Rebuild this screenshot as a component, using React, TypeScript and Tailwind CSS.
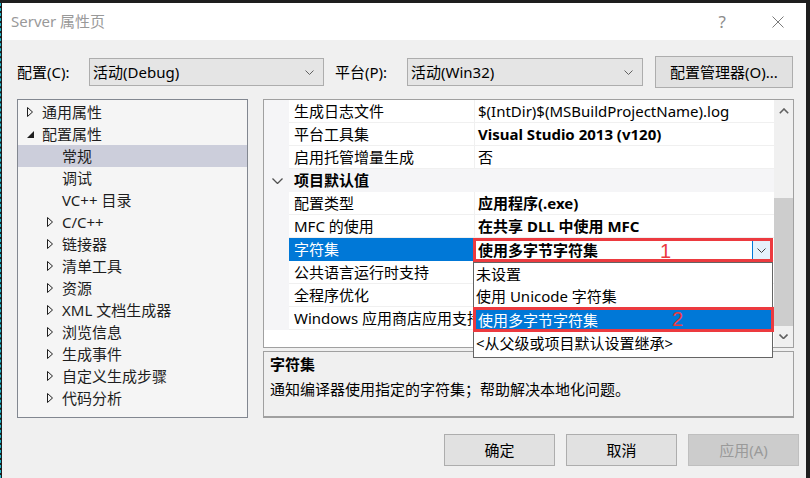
import React from 'react';

type TreeItem = { label: string; level: number; arrow?: 'open' | 'closed'; selected?: boolean };

const tree: TreeItem[] = [
  { label: '通用属性', level: 0, arrow: 'closed' },
  { label: '配置属性', level: 0, arrow: 'open' },
  { label: '常规', level: 1, selected: true },
  { label: '调试', level: 1 },
  { label: 'VC++ 目录', level: 1 },
  { label: 'C/C++', level: 1, arrow: 'closed' },
  { label: '链接器', level: 1, arrow: 'closed' },
  { label: '清单工具', level: 1, arrow: 'closed' },
  { label: '资源', level: 1, arrow: 'closed' },
  { label: 'XML 文档生成器', level: 1, arrow: 'closed' },
  { label: '浏览信息', level: 1, arrow: 'closed' },
  { label: '生成事件', level: 1, arrow: 'closed' },
  { label: '自定义生成步骤', level: 1, arrow: 'closed' },
  { label: '代码分析', level: 1, arrow: 'closed' },
];

type Row = { name: string; value?: string; bold?: boolean; category?: boolean; selected?: boolean };

const rows: Row[] = [
  { name: '生成日志文件', value: '$(IntDir)$(MSBuildProjectName).log' },
  { name: '平台工具集', value: 'Visual Studio 2013 (v120)', bold: true },
  { name: '启用托管增量生成', value: '否' },
  { name: '项目默认值', category: true },
  { name: '配置类型', value: '应用程序(.exe)', bold: true },
  { name: 'MFC 的使用', value: '在共享 DLL 中使用 MFC', bold: true },
  { name: '字符集', selected: true },
  { name: '公共语言运行时支持' },
  { name: '全程序优化' },
  { name: 'Windows 应用商店应用支持' },
];

const options = ['未设置', '使用 Unicode 字符集', '使用多字节字符集', '<从父级或项目默认设置继承>'];

function Chevron({ color = '#606060', bold = false }: { color?: string; bold?: boolean }) {
  return (
    <svg width="9" height="5" viewBox="0 0 9 5">
      <path d="M0.5 0.5 L4.5 4.5 L8.5 0.5" stroke={color} strokeWidth={bold ? 1.6 : 1} fill="none" />
    </svg>
  );
}

function Arrow({ kind }: { kind?: 'open' | 'closed' }) {
  if (kind === 'closed')
    return (
      <svg width="7" height="10" viewBox="0 0 7 10">
        <path d="M0.5 0.5 L5.5 5 L0.5 9.5 Z" stroke="#1e1e1e" fill="none" />
      </svg>
    );
  if (kind === 'open')
    return (
      <svg width="7" height="10" viewBox="0 0 7 10">
        <path d="M7 2 L7 9 L0 9 Z" fill="#1e1e1e" />
      </svg>
    );
  return null;
}

function Combo({ text, width }: { text: string; width: string }) {
  return (
    <div className={`flex h-[28px] ${width} items-center justify-between border border-[#adadad] bg-[#e5e5e5] pl-[3px] pr-[9px]`}>
      <span>{text}</span>
      <Chevron />
    </div>
  );
}

function CharsetEditor() {
  return (
    <>
      <div className="absolute left-[-2px] top-0 z-10 flex h-[24px] w-[300px] items-center border-[3px] border-[#ec3a3f] bg-white">
        <span className="flex-1 pl-[2px] font-bold leading-[18px] text-black">使用多字节字符集</span>
        <div className="flex h-full w-[18px] items-center justify-center border-l border-[#0078d7] bg-[#e5f1fb]">
          <Chevron color="#404040" />
        </div>
        <span className="absolute left-[184px] top-[-2px] font-['Liberation_Sans',sans-serif] text-[20px] leading-[24px] text-[#ec3a3f]">1</span>
      </div>
      <div className="absolute left-[-2px] top-[24px] z-10 w-[300px] border border-[#646464] bg-white pb-[3px] text-black">
        {options.map((o, i) =>
          i === 2 ? (
            <div key={o} className="relative flex h-[25px] items-center bg-[#0078d7] pl-[4px] text-white">
              {o}
              <div className="absolute inset-y-0 left-[-1px] right-[-2px] border-[3px] border-[#ec3a3f]" />
              <span className="absolute left-[198px] top-[0px] font-['Liberation_Sans',sans-serif] text-[20px] leading-[24px] text-[#ec3a3f]">2</span>
            </div>
          ) : (
            <div key={o} className="flex h-[22px] items-center pl-[2px]">
              {o}
            </div>
          )
        )}
      </div>
    </>
  );
}

export default function App() {
  return (
    <div className="flex h-[478px] w-[810px] overflow-hidden bg-[#1e1e1e] pt-[3px] pr-[4px] font-['Noto_Sans','Noto_Sans_CJK_SC',sans-serif] text-[15px] text-black">
      <div className="w-[2px] border-l border-dashed border-[#1fb5c9]" />
      <div className="flex flex-1 flex-col bg-[#f0f0f0]">
        {/* title bar */}
        <div className="flex h-[37px] items-center bg-white pl-[9px] pr-[22px]">
          <span className="text-[#999999]">Server 属性页</span>
          <span className="ml-auto text-[17px] text-[#8c8c8c]">?</span>
          <svg className="ml-[46px]" width="12" height="12" viewBox="0 0 12 12">
            <path d="M0.5 0.5 L11.5 11.5 M11.5 0.5 L0.5 11.5" stroke="#7a7a7a" />
          </svg>
        </div>

        {/* configuration row */}
        <div className="mt-[16px] flex h-[32px] items-center pl-[15px]">
          <span className="w-[72px]">配置(C):</span>
          <Combo text="活动(Debug)" width="w-[235px]" />
          <span className="ml-[11px] w-[72px]">平台(P):</span>
          <Combo text="活动(Win32)" width="w-[236px]" />
          <button className="ml-[12px] h-[32px] w-[138px] border border-[#adadad] bg-[#e1e1e1]">配置管理器(O)...</button>
        </div>

        {/* main */}
        <div className="mt-[11px] flex gap-[15px] pl-[15px]">
          <div className="h-[319px] w-[231px] border border-[#828790] bg-[#f5f5f5] pt-[1px]">
            {tree.map((t) => (
              <div
                key={t.label}
                className={`flex h-[22px] items-center ${t.level === 0 ? 'pl-[9px]' : 'pl-[29px]'} ${t.selected ? 'bg-[#cccedb]' : ''}`}
              >
                <span className="flex w-[15px] items-center">
                  <Arrow kind={t.arrow} />
                </span>
                <span className="text-[#1e1e1e]">{t.label}</span>
              </div>
            ))}
          </div>

          <div className="flex w-[531px] flex-col gap-[3px]">
            {/* property grid */}
            <div className="flex h-[249px] border border-[#a0a0a0] bg-white">
              <div className="flex flex-1 flex-col">
                {rows.map((r) =>
                  r.category ? (
                    <div key={r.name} className="flex h-[23px] items-center bg-[#f5f5f7]">
                      <span className="flex w-[25px] justify-center pl-[1px]">
                        <svg width="11" height="6" viewBox="0 0 11 6">
                          <path d="M0.5 0.5 L5.5 5.5 L10.5 0.5" stroke="#505050" strokeWidth="1.3" fill="none" />
                        </svg>
                      </span>
                      <span className="pl-[5px] font-bold">{r.name}</span>
                    </div>
                  ) : (
                    <div key={r.name} className="flex h-[23px]">
                      <div className="w-[25px] bg-[#f5f5f7]" />
                      <div
                        className={`w-[185px] whitespace-nowrap border-b pl-[5px] leading-[22px] ${
                          r.selected ? 'border-[#0078d7] bg-[#0078d7] text-white' : 'border-[#f0f0f0]'
                        }`}
                      >
                        {r.name}
                      </div>
                      <div className="relative flex-1 border-b border-l border-[#f0f0f0] pl-[3px] leading-[22px]">
                        {r.selected ? <CharsetEditor /> : <span className={r.bold ? 'font-bold' : ''}>{r.value}</span>}
                      </div>
                    </div>
                  )
                )}
              </div>
              {/* scrollbar */}
              <div className="flex w-[19px] flex-col bg-[#f0f0f0]">
                <div className="flex h-[22px] items-center justify-center">
                  <svg width="10" height="6" viewBox="0 0 10 6">
                    <path d="M0.8 5.2 L5 1 L9.2 5.2" stroke="#606060" strokeWidth="1.6" fill="none" />
                  </svg>
                </div>
                <div className="mt-[76px] h-[128px] bg-[#cdcdcd]" />
                <div className="flex h-[20px] items-center justify-center">
                  <Chevron bold />
                </div>
              </div>
            </div>

            {/* description */}
            <div className="h-[67px] border border-b-2 border-[#a0a0a0] bg-[#f0f0f0] pl-[6px] pt-[1px]">
              <div className="font-bold leading-[22px]">字符集</div>
              <div className="mt-[3px] leading-[22px]">通知编译器使用指定的字符集；帮助解决本地化问题。</div>
            </div>
          </div>
        </div>

        {/* buttons */}
        <div className="mt-[16px] flex justify-end gap-[11px] pr-[7px]">
          <button className="h-[32px] w-[111px] border border-[#adadad] bg-[#e1e1e1]">确定</button>
          <button className="h-[32px] w-[111px] border border-[#adadad] bg-[#e1e1e1]">取消</button>
          <button className="h-[32px] w-[111px] border border-[#bfbfbf] bg-[#cccccc] text-[#9a9a9a]">应用(A)</button>
        </div>
      </div>
    </div>
  );
}
